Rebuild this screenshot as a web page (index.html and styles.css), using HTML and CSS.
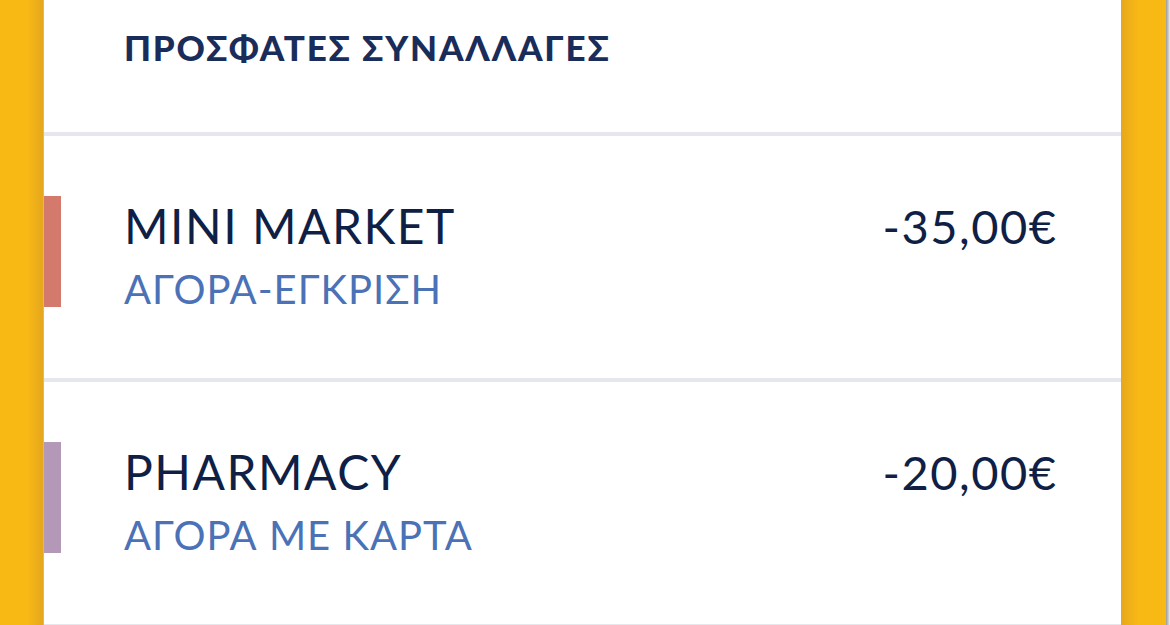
FILE: index.html
```html
<!DOCTYPE html>
<html lang="el">
<head>
    <meta charset="UTF-8">
    <meta name="viewport" content="width=device-width, initial-scale=1.0">
    <title>Πρόσφατες συναλλαγές</title>
    <link rel="stylesheet" href="styles.css">
</head>
<body>
    <div class="pagina">
        <div class="lateral esquerda"></div>

        <main class="cartao">
            <div class="cabecalho">
                <h2 class="titulo">ΠΡΟΣΦΑΤΕΣ ΣΥΝΑΛΛΑΓΕΣ</h2>
            </div>

            <div class="linha">
                <span class="marca vermelho"></span>
                <div class="dados">
                    <div class="topo">
                        <span class="nome">MINI MARKET</span>
                        <span class="valor">-35,00€</span>
                    </div>
                    <div class="tipo">ΑΓΟΡΑ-ΕΓΚΡΙΣΗ</div>
                </div>
            </div>

            <div class="linha">
                <span class="marca roxo"></span>
                <div class="dados">
                    <div class="topo">
                        <span class="nome">PHARMACY</span>
                        <span class="valor">-20,00€</span>
                    </div>
                    <div class="tipo">ΑΓΟΡΑ ΜΕ ΚΑΡΤΑ</div>
                </div>
            </div>
        </main>

        <div class="lateral direita"></div>
        <div class="borda"></div>
    </div>
</body>
</html>
```

FILE: styles.css
```css
* {
    border: none;
    padding: 0px;
    margin: 0px;
    box-sizing: border-box;
}

body {
    font-family: Lato, "Noto Sans", sans-serif;
    background-color: white;
}

.pagina {
    display: flex;
    height: 100vh;
}

.lateral {
    width: 44px;
}

.esquerda {
    background: linear-gradient(to right, #f9b915 60%, #e5a71d 97%, #e9c27a);
}

.direita {
    width: 45px;
    background: linear-gradient(to left, #f9b915 60%, #e6a81c);
}

.borda {
    width: 4px;
    background: linear-gradient(to right, #9b9b9b, #c9c9c9 60%, #f0f0f0);
}

/* Cartao branco */

.cartao {
    flex: 1;
    background-color: white;
    overflow: hidden;
}

.cabecalho {
    height: 136px;
    padding: 30px 0 0 80px;
    border-bottom: 4px solid #e6e7ec;
}

.titulo {
    font-size: 35px;
    font-weight: 900;
    letter-spacing: 1.8px;
    line-height: 34px;
    color: #1a2d5a;
}

.linha {
    display: flex;
    align-items: flex-start;
    height: 246px;
    padding-top: 60px;
    border-bottom: 4px solid #e6e7ec;
}

.marca {
    width: 17px;
    height: 111px;
    flex-shrink: 0;
}

.vermelho {
    background-color: #d47a6c;
}

.roxo {
    background-color: #b498b7;
}

.dados {
    flex: 1;
    margin-left: 63px;
    padding-right: 65px;
    padding-top: 6px;
}

.topo {
    display: flex;
    justify-content: space-between;
    align-items: baseline;
}

.nome {
    font-size: 48px;
    line-height: 48px;
    letter-spacing: 1.5px;
    color: #101f45;
}

.valor {
    font-size: 47px;
    line-height: 48px;
    letter-spacing: 1.5px;
    margin-right: -1.5px;
    color: #101f45;
}

.tipo {
    margin-top: 19px;
    font-size: 40px;
    line-height: 40px;
    letter-spacing: 1px;
    color: #4b72b6;
}
```
